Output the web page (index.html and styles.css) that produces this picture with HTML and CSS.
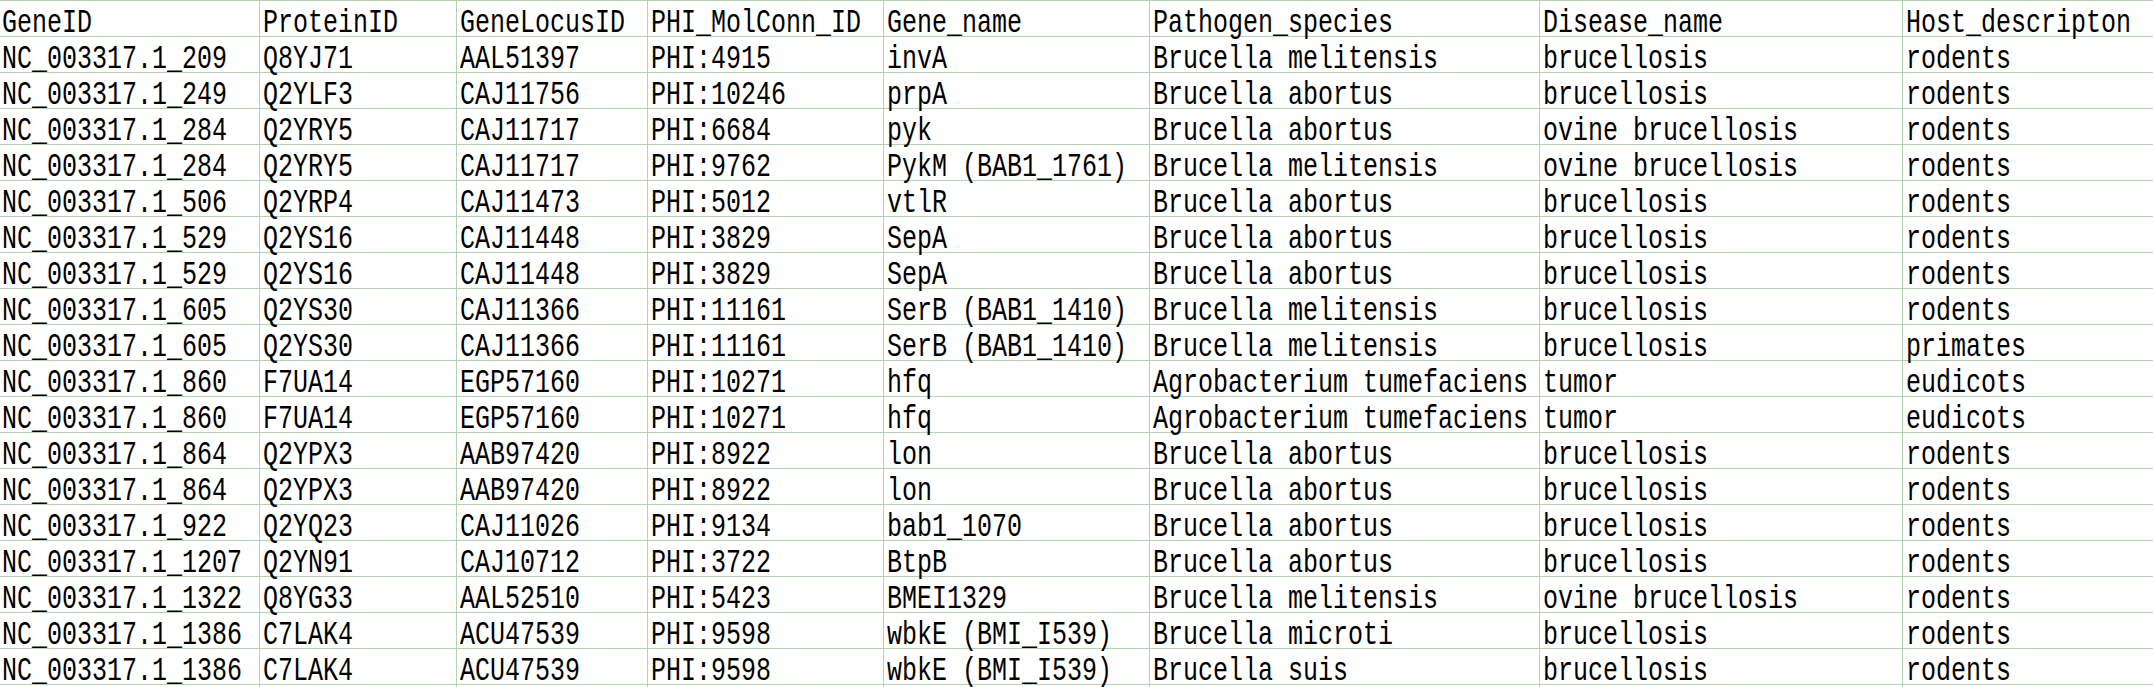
FILE: index.html
```html
<!DOCTYPE html>
<html lang="en">
<head>
<meta charset="utf-8">
<title>PHI genes</title>
<link rel="stylesheet" href="styles.css">
</head>
<body>
<div class="sheet">
  <div class="cell"><span class="txt">GeneID</span></div><div class="cell"><span class="txt">ProteinID</span></div><div class="cell"><span class="txt">GeneLocusID</span></div><div class="cell"><span class="txt">PHI_MolConn_ID</span></div><div class="cell"><span class="txt">Gene_name</span></div><div class="cell"><span class="txt">Pathogen_species</span></div><div class="cell"><span class="txt">Disease_name</span></div><div class="cell last"><span class="txt">Host_descripton</span></div>

  <div class="cell"><span class="txt">NC_003317.1_209</span></div><div class="cell"><span class="txt">Q8YJ71</span></div><div class="cell"><span class="txt">AAL51397</span></div><div class="cell"><span class="txt">PHI:4915</span></div><div class="cell"><span class="txt">invA</span></div><div class="cell"><span class="txt">Brucella melitensis</span></div><div class="cell"><span class="txt">brucellosis</span></div><div class="cell last"><span class="txt">rodents</span></div>

  <div class="cell"><span class="txt">NC_003317.1_249</span></div><div class="cell"><span class="txt">Q2YLF3</span></div><div class="cell"><span class="txt">CAJ11756</span></div><div class="cell"><span class="txt">PHI:10246</span></div><div class="cell"><span class="txt">prpA</span></div><div class="cell"><span class="txt">Brucella abortus</span></div><div class="cell"><span class="txt">brucellosis</span></div><div class="cell last"><span class="txt">rodents</span></div>

  <div class="cell"><span class="txt">NC_003317.1_284</span></div><div class="cell"><span class="txt">Q2YRY5</span></div><div class="cell"><span class="txt">CAJ11717</span></div><div class="cell"><span class="txt">PHI:6684</span></div><div class="cell"><span class="txt">pyk</span></div><div class="cell"><span class="txt">Brucella abortus</span></div><div class="cell"><span class="txt">ovine brucellosis</span></div><div class="cell last"><span class="txt">rodents</span></div>

  <div class="cell"><span class="txt">NC_003317.1_284</span></div><div class="cell"><span class="txt">Q2YRY5</span></div><div class="cell"><span class="txt">CAJ11717</span></div><div class="cell"><span class="txt">PHI:9762</span></div><div class="cell"><span class="txt">PykM (BAB1_1761)</span></div><div class="cell"><span class="txt">Brucella melitensis</span></div><div class="cell"><span class="txt">ovine brucellosis</span></div><div class="cell last"><span class="txt">rodents</span></div>

  <div class="cell"><span class="txt">NC_003317.1_506</span></div><div class="cell"><span class="txt">Q2YRP4</span></div><div class="cell"><span class="txt">CAJ11473</span></div><div class="cell"><span class="txt">PHI:5012</span></div><div class="cell"><span class="txt">vtlR</span></div><div class="cell"><span class="txt">Brucella abortus</span></div><div class="cell"><span class="txt">brucellosis</span></div><div class="cell last"><span class="txt">rodents</span></div>

  <div class="cell"><span class="txt">NC_003317.1_529</span></div><div class="cell"><span class="txt">Q2YS16</span></div><div class="cell"><span class="txt">CAJ11448</span></div><div class="cell"><span class="txt">PHI:3829</span></div><div class="cell"><span class="txt">SepA</span></div><div class="cell"><span class="txt">Brucella abortus</span></div><div class="cell"><span class="txt">brucellosis</span></div><div class="cell last"><span class="txt">rodents</span></div>

  <div class="cell"><span class="txt">NC_003317.1_529</span></div><div class="cell"><span class="txt">Q2YS16</span></div><div class="cell"><span class="txt">CAJ11448</span></div><div class="cell"><span class="txt">PHI:3829</span></div><div class="cell"><span class="txt">SepA</span></div><div class="cell"><span class="txt">Brucella abortus</span></div><div class="cell"><span class="txt">brucellosis</span></div><div class="cell last"><span class="txt">rodents</span></div>

  <div class="cell"><span class="txt">NC_003317.1_605</span></div><div class="cell"><span class="txt">Q2YS30</span></div><div class="cell"><span class="txt">CAJ11366</span></div><div class="cell"><span class="txt">PHI:11161</span></div><div class="cell"><span class="txt">SerB (BAB1_1410)</span></div><div class="cell"><span class="txt">Brucella melitensis</span></div><div class="cell"><span class="txt">brucellosis</span></div><div class="cell last"><span class="txt">rodents</span></div>

  <div class="cell"><span class="txt">NC_003317.1_605</span></div><div class="cell"><span class="txt">Q2YS30</span></div><div class="cell"><span class="txt">CAJ11366</span></div><div class="cell"><span class="txt">PHI:11161</span></div><div class="cell"><span class="txt">SerB (BAB1_1410)</span></div><div class="cell"><span class="txt">Brucella melitensis</span></div><div class="cell"><span class="txt">brucellosis</span></div><div class="cell last"><span class="txt">primates</span></div>

  <div class="cell"><span class="txt">NC_003317.1_860</span></div><div class="cell"><span class="txt">F7UA14</span></div><div class="cell"><span class="txt">EGP57160</span></div><div class="cell"><span class="txt">PHI:10271</span></div><div class="cell"><span class="txt">hfq</span></div><div class="cell"><span class="txt">Agrobacterium tumefaciens</span></div><div class="cell"><span class="txt">tumor</span></div><div class="cell last"><span class="txt">eudicots</span></div>

  <div class="cell"><span class="txt">NC_003317.1_860</span></div><div class="cell"><span class="txt">F7UA14</span></div><div class="cell"><span class="txt">EGP57160</span></div><div class="cell"><span class="txt">PHI:10271</span></div><div class="cell"><span class="txt">hfq</span></div><div class="cell"><span class="txt">Agrobacterium tumefaciens</span></div><div class="cell"><span class="txt">tumor</span></div><div class="cell last"><span class="txt">eudicots</span></div>

  <div class="cell"><span class="txt">NC_003317.1_864</span></div><div class="cell"><span class="txt">Q2YPX3</span></div><div class="cell"><span class="txt">AAB97420</span></div><div class="cell"><span class="txt">PHI:8922</span></div><div class="cell"><span class="txt">lon</span></div><div class="cell"><span class="txt">Brucella abortus</span></div><div class="cell"><span class="txt">brucellosis</span></div><div class="cell last"><span class="txt">rodents</span></div>

  <div class="cell"><span class="txt">NC_003317.1_864</span></div><div class="cell"><span class="txt">Q2YPX3</span></div><div class="cell"><span class="txt">AAB97420</span></div><div class="cell"><span class="txt">PHI:8922</span></div><div class="cell"><span class="txt">lon</span></div><div class="cell"><span class="txt">Brucella abortus</span></div><div class="cell"><span class="txt">brucellosis</span></div><div class="cell last"><span class="txt">rodents</span></div>

  <div class="cell"><span class="txt">NC_003317.1_922</span></div><div class="cell"><span class="txt">Q2YQ23</span></div><div class="cell"><span class="txt">CAJ11026</span></div><div class="cell"><span class="txt">PHI:9134</span></div><div class="cell"><span class="txt">bab1_1070</span></div><div class="cell"><span class="txt">Brucella abortus</span></div><div class="cell"><span class="txt">brucellosis</span></div><div class="cell last"><span class="txt">rodents</span></div>

  <div class="cell"><span class="txt">NC_003317.1_1207</span></div><div class="cell"><span class="txt">Q2YN91</span></div><div class="cell"><span class="txt">CAJ10712</span></div><div class="cell"><span class="txt">PHI:3722</span></div><div class="cell"><span class="txt">BtpB</span></div><div class="cell"><span class="txt">Brucella abortus</span></div><div class="cell"><span class="txt">brucellosis</span></div><div class="cell last"><span class="txt">rodents</span></div>

  <div class="cell"><span class="txt">NC_003317.1_1322</span></div><div class="cell"><span class="txt">Q8YG33</span></div><div class="cell"><span class="txt">AAL52510</span></div><div class="cell"><span class="txt">PHI:5423</span></div><div class="cell"><span class="txt">BMEI1329</span></div><div class="cell"><span class="txt">Brucella melitensis</span></div><div class="cell"><span class="txt">ovine brucellosis</span></div><div class="cell last"><span class="txt">rodents</span></div>

  <div class="cell"><span class="txt">NC_003317.1_1386</span></div><div class="cell"><span class="txt">C7LAK4</span></div><div class="cell"><span class="txt">ACU47539</span></div><div class="cell"><span class="txt">PHI:9598</span></div><div class="cell"><span class="txt">wbkE (BMI_I539)</span></div><div class="cell"><span class="txt">Brucella microti</span></div><div class="cell"><span class="txt">brucellosis</span></div><div class="cell last"><span class="txt">rodents</span></div>

  <div class="cell"><span class="txt">NC_003317.1_1386</span></div><div class="cell"><span class="txt">C7LAK4</span></div><div class="cell"><span class="txt">ACU47539</span></div><div class="cell"><span class="txt">PHI:9598</span></div><div class="cell"><span class="txt">wbkE (BMI_I539)</span></div><div class="cell"><span class="txt">Brucella suis</span></div><div class="cell"><span class="txt">brucellosis</span></div><div class="cell last"><span class="txt">rodents</span></div>

  <div class="cell"></div><div class="cell"></div><div class="cell"></div><div class="cell"></div><div class="cell"></div><div class="cell"></div><div class="cell"></div><div class="cell last"></div>
</div>
</body>
</html>
```

FILE: styles.css
```css
html, body {
  margin: 0;
  padding: 0;
  background: #ffffff;
}

body {
  width: 2153px;
  height: 687px;
  overflow: hidden;
}

.sheet {
  display: grid;
  grid-template-columns: 260px 197px 191px 236px 266px 390px 363px 250px;
  grid-auto-rows: 36px;
  border-top: 1px solid #b1d5b1;
  font-family: "Liberation Mono", "DejaVu Sans Mono", monospace;
  font-size: 25px;
  color: #000000;
}

.cell {
  box-sizing: border-box;
  border-right: 1px solid #b1d5b1;
  border-bottom: 1px solid #b1d5b1;
  padding: 0 0 0 3px;
  display: flex;
  align-items: flex-end;
  white-space: pre;
  overflow: visible;
}

.cell:nth-child(8n+1) {
  padding-left: 2px;
}

.cell.last {
  border-right: none;
}

.txt {
  display: inline-block;
  line-height: 20px;
  height: 20px;
  transform: scaleY(1.3);
  transform-origin: 0 16.7px;
}
```
